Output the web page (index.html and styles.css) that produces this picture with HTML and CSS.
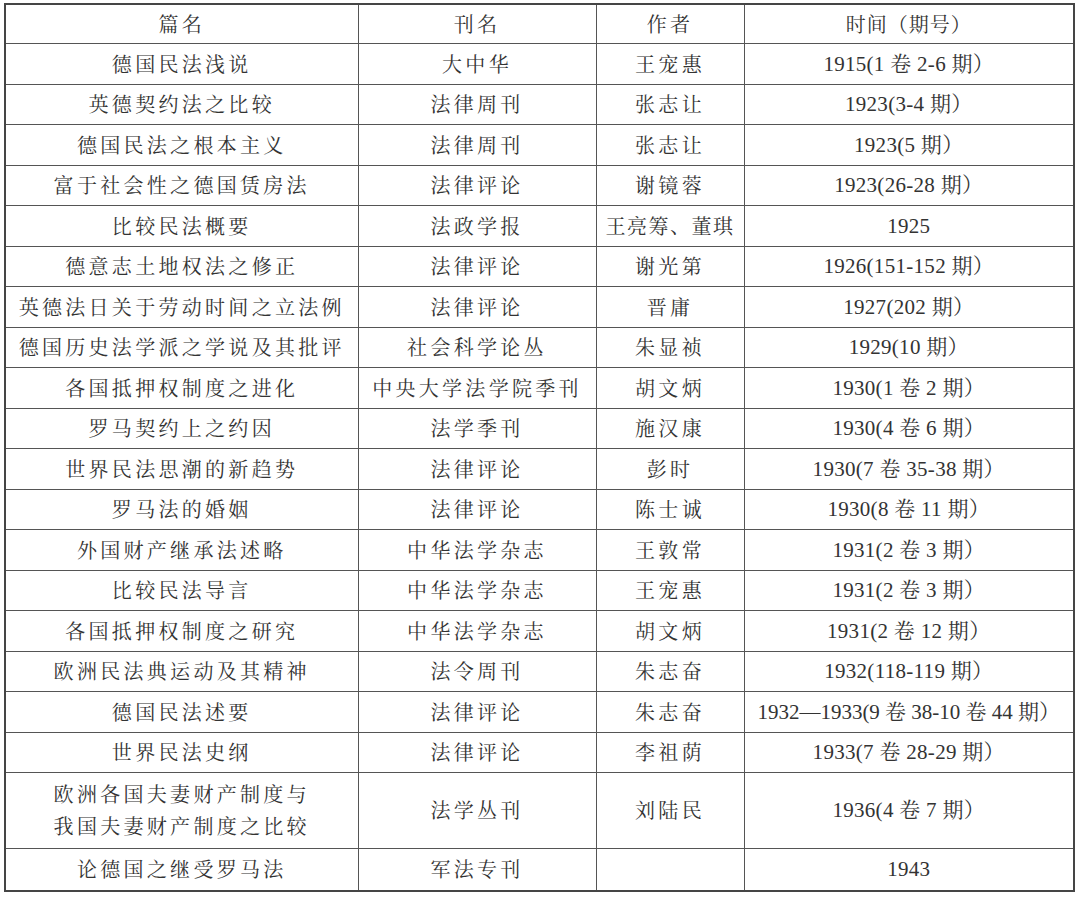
FILE: index.html
```html
<!DOCTYPE html>
<html lang="zh-CN">
<head>
<meta charset="utf-8">
<title>表</title>
<link rel="stylesheet" href="styles.css">
</head>
<body>
<table class="tbl">
  <colgroup>
    <col class="c1"><col class="c2"><col class="c3"><col class="c4">
  </colgroup>
  <thead>
    <tr class="head"><th>篇名</th><th>刊名</th><th>作者</th><th class="num">时间（期号）</th></tr>
  </thead>
  <tbody>
    <tr><td>德国民法浅说</td><td>大中华</td><td>王宠惠</td><td class="num">1915(1 卷 2-6 期）</td></tr>
    <tr><td>英德契约法之比较</td><td>法律周刊</td><td>张志让</td><td class="num">1923(3-4 期）</td></tr>
    <tr><td>德国民法之根本主义</td><td>法律周刊</td><td>张志让</td><td class="num">1923(5 期）</td></tr>
    <tr><td>富于社会性之德国赁房法</td><td>法律评论</td><td>谢镜蓉</td><td class="num">1923(26-28 期）</td></tr>
    <tr><td>比较民法概要</td><td>法政学报</td><td class="tight">王亮筹、董琪</td><td class="num">1925</td></tr>
    <tr><td>德意志土地权法之修正</td><td>法律评论</td><td>谢光第</td><td class="num">1926(151-152 期）</td></tr>
    <tr><td>英德法日关于劳动时间之立法例</td><td>法律评论</td><td>晋庸</td><td class="num">1927(202 期）</td></tr>
    <tr><td>德国历史法学派之学说及其批评</td><td>社会科学论丛</td><td>朱显祯</td><td class="num">1929(10 期）</td></tr>
    <tr><td>各国抵押权制度之进化</td><td>中央大学法学院季刊</td><td>胡文炳</td><td class="num">1930(1 卷 2 期）</td></tr>
    <tr><td>罗马契约上之约因</td><td>法学季刊</td><td>施汉康</td><td class="num">1930(4 卷 6 期）</td></tr>
    <tr><td>世界民法思潮的新趋势</td><td>法律评论</td><td>彭时</td><td class="num">1930(7 卷 35-38 期）</td></tr>
    <tr><td>罗马法的婚姻</td><td>法律评论</td><td>陈士诚</td><td class="num">1930(8 卷 11 期）</td></tr>
    <tr><td>外国财产继承法述略</td><td>中华法学杂志</td><td>王敦常</td><td class="num">1931(2 卷 3 期）</td></tr>
    <tr><td>比较民法导言</td><td>中华法学杂志</td><td>王宠惠</td><td class="num">1931(2 卷 3 期）</td></tr>
    <tr><td>各国抵押权制度之研究</td><td>中华法学杂志</td><td>胡文炳</td><td class="num">1931(2 卷 12 期）</td></tr>
    <tr><td>欧洲民法典运动及其精神</td><td>法令周刊</td><td>朱志奋</td><td class="num">1932(118-119 期）</td></tr>
    <tr><td>德国民法述要</td><td>法律评论</td><td>朱志奋</td><td class="num long">1932—1933(9 卷 38-10 卷 44 期）</td></tr>
    <tr><td>世界民法史纲</td><td>法律评论</td><td>李祖荫</td><td class="num">1933(7 卷 28-29 期）</td></tr>
    <tr class="double"><td>欧洲各国夫妻财产制度与<br>我国夫妻财产制度之比较</td><td>法学丛刊</td><td>刘陆民</td><td class="num">1936(4 卷 7 期）</td></tr>
    <tr class="last"><td>论德国之继受罗马法</td><td>军法专刊</td><td></td><td class="num">1943</td></tr>
  </tbody>
</table>
</body>
</html>
```

FILE: styles.css
```css
html, body {
  margin: 0;
  padding: 0;
  background: #ffffff;
}
body {
  padding: 3px 0 0 4px;
}
.tbl {
  border-collapse: collapse;
  table-layout: fixed;
  width: 1069px;
  border: 2px solid #454545;
  font-family: "Noto Serif CJK SC", "Noto Sans CJK SC", serif;
  font-size: 20px;
  color: #333333;
}
.c1 { width: 353px; }
.c2 { width: 238px; }
.c3 { width: 148px; }
.c4 { width: 330px; }
.tbl th, .tbl td {
  border: 1px solid #555555;
  padding: 0;
  text-align: center;
  vertical-align: middle;
  font-weight: 400;
  letter-spacing: 3.3px;
  line-height: 32px;
  white-space: nowrap;
}
.tbl .head th { height: 38px; }
.tbl tbody td { height: 39.5px; }
.tbl .tight { letter-spacing: 1.5px; }
.tbl .num {
  font-family: "Liberation Serif", "Noto Serif CJK SC", "Noto Sans CJK SC", serif;
  font-size: 21px;
  letter-spacing: 0.3px;
}
.tbl .head .num {
  font-family: "Noto Serif CJK SC", "Noto Sans CJK SC", serif;
  font-size: 20px;
  letter-spacing: 1px;
}
.tbl .long { letter-spacing: 0; }
.tbl tr.double td { height: 74.5px; }
.tbl tr.last td { height: 41px; }
```
